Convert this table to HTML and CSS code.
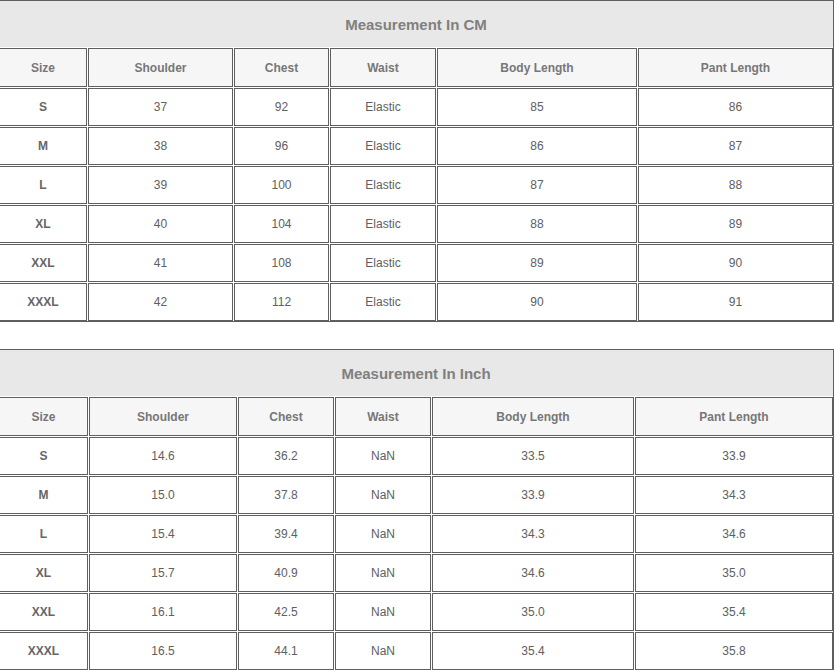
FILE: index.html
```html
<!DOCTYPE html>
<html lang="en">
<head>
<meta charset="utf-8">
<title>Size Chart</title>
<link rel="stylesheet" href="styles.css">
</head>
<body>
<div class="sheet">
  <div class="frame">
    <table class="chart cm">
      <colgroup>
        <col class="c1"><col class="c2"><col class="c3"><col class="c4"><col class="c5"><col class="c6">
      </colgroup>
      <tr><td class="title" colspan="6">Measurement In CM</td></tr>
      <tr class="head"><th>Size</th><th>Shoulder</th><th>Chest</th><th>Waist</th><th>Body Length</th><th>Pant Length</th></tr>
      <tr><td class="size">S</td><td>37</td><td>92</td><td>Elastic</td><td>85</td><td>86</td></tr>
      <tr><td class="size">M</td><td>38</td><td>96</td><td>Elastic</td><td>86</td><td>87</td></tr>
      <tr><td class="size">L</td><td>39</td><td>100</td><td>Elastic</td><td>87</td><td>88</td></tr>
      <tr><td class="size">XL</td><td>40</td><td>104</td><td>Elastic</td><td>88</td><td>89</td></tr>
      <tr><td class="size">XXL</td><td>41</td><td>108</td><td>Elastic</td><td>89</td><td>90</td></tr>
      <tr><td class="size">XXXL</td><td>42</td><td>112</td><td>Elastic</td><td>90</td><td>91</td></tr>
    </table>
  </div>
  <div class="frame">
    <table class="chart inch">
      <colgroup>
        <col class="c1"><col class="c2"><col class="c3"><col class="c4"><col class="c5"><col class="c6">
      </colgroup>
      <tr><td class="title" colspan="6">Measurement In Inch</td></tr>
      <tr class="head"><th>Size</th><th>Shoulder</th><th>Chest</th><th>Waist</th><th>Body Length</th><th>Pant Length</th></tr>
      <tr><td class="size">S</td><td>14.6</td><td>36.2</td><td>NaN</td><td>33.5</td><td>33.9</td></tr>
      <tr><td class="size">M</td><td>15.0</td><td>37.8</td><td>NaN</td><td>33.9</td><td>34.3</td></tr>
      <tr><td class="size">L</td><td>15.4</td><td>39.4</td><td>NaN</td><td>34.3</td><td>34.6</td></tr>
      <tr><td class="size">XL</td><td>15.7</td><td>40.9</td><td>NaN</td><td>34.6</td><td>35.0</td></tr>
      <tr><td class="size">XXL</td><td>16.1</td><td>42.5</td><td>NaN</td><td>35.0</td><td>35.4</td></tr>
      <tr><td class="size">XXXL</td><td>16.5</td><td>44.1</td><td>NaN</td><td>35.4</td><td>35.8</td></tr>
    </table>
  </div>
</div>
</body>
</html>
```

FILE: styles.css
```css
html, body {
  margin: 0;
  padding: 0;
  background: #ffffff;
  overflow: hidden;
}

body {
  font-family: "Liberation Sans", Arial, sans-serif;
  font-size: 12px;
  color: #606060;
}

.sheet {
  display: flex;
  flex-direction: column;
  gap: 27px;
  width: 836px;
  margin-left: -2px;
}

.frame {
  box-sizing: border-box;
  width: 836px;
  border: 1px solid #5f5f5f;
}

.chart {
  margin: -1px;
  width: 836px;
  table-layout: fixed;
  border-collapse: separate;
  border-spacing: 1px;
}

.chart td,
.chart th {
  box-sizing: border-box;
  border: 1px solid #5f5f5f;
  height: 38px;
  padding: 0;
  text-align: center;
  vertical-align: middle;
  background: #ffffff;
}

.chart .title {
  border: none;
  height: 46px;
  background: #e8e8e8;
  font-size: 15px;
  font-weight: bold;
  color: #808080;
}

.chart .head th {
  height: 39px;
  background: #f6f6f6;
  font-weight: bold;
  color: #777777;
}

.chart .size {
  font-weight: bold;
  color: #666666;
}

.cm .c1 { width: 88px; }
.cm .c2 { width: 145px; }
.cm .c3 { width: 95px; }
.cm .c4 { width: 106px; }
.cm .c5 { width: 200px; }
.cm .c6 { width: 195px; }

.inch .c1 { width: 89px; }
.inch .c2 { width: 148px; }
.inch .c3 { width: 96px; }
.inch .c4 { width: 96px; }
.inch .c5 { width: 202px; }
.inch .c6 { width: 198px; }
```
